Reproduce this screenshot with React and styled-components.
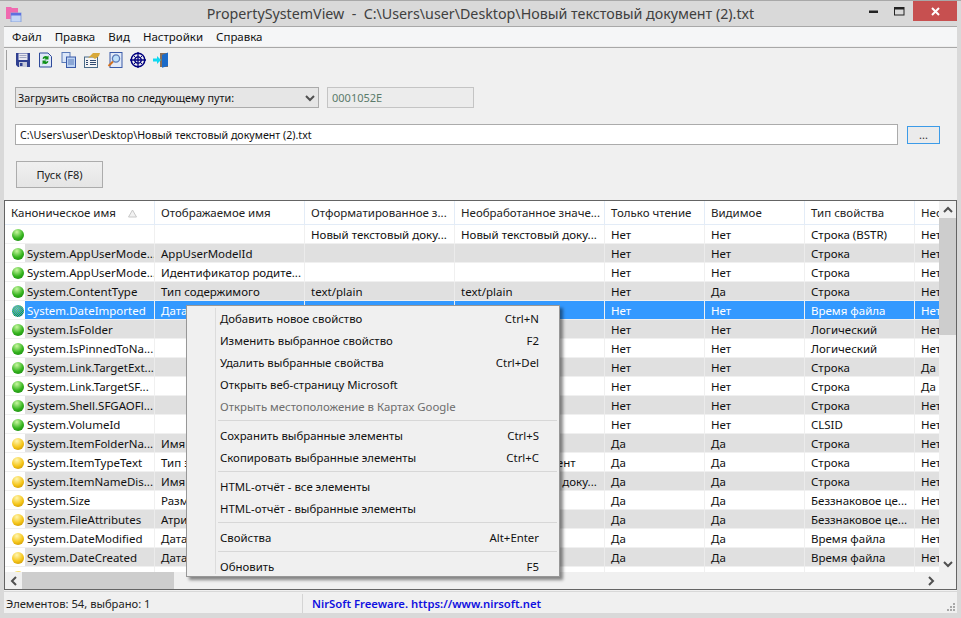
import React from 'react';
import styled, { createGlobalStyle } from 'styled-components';

const Global = createGlobalStyle`
  html, body { margin: 0; padding: 0; background: #d9d9d9; overflow: hidden; }
  * { box-sizing: border-box; }
  body { font-family: "Noto Sans", "Open Sans", sans-serif; font-size: 11.5px; color: #000; }
`;

const UI = '"Noto Sans", "Open Sans", sans-serif';

const Win = styled.div`
  width: 961px; height: 618px; background: #d9d9d9; border-top: 1px solid #a8a8a8;
  display: flex; flex-direction: column; padding: 0 4px 5px 4px; font-family: ${UI}; font-size: 11.5px;
`;
const TitleBar = styled.div` height: 25px; flex: none; display: flex; align-items: center; `;
const AppIcon = styled.svg` width: 16px; height: 16px; margin: 0 0 0 2px; flex: none; `;
const TitleText = styled.div`
  flex: 1; text-align: center; font-size: 14.25px; color: #404040; white-space: pre; padding-left: 79px;
`;
const WinButtons = styled.div` display: flex; align-self: flex-start; height: 20px; `;
const WinBtn = styled.div`
  width: ${p => p.$w}px; height: 20px; display: flex; align-items: center; justify-content: center;
  background: ${p => p.$close ? '#c75050' : 'transparent'};
`;
const Client = styled.div` flex: 1; display: flex; flex-direction: column; background: #f0f0f0; border-top: 1px solid #a8a8a8; min-height: 0; `;
const MenuBar = styled.div`
  height: 20px; flex: none; background: #f5f6f7; display: flex; align-items: center; padding-left: 8px; gap: 13px; font-size: 11.5px; color: #111;
  border-bottom: 1px solid #eeeeee;
`;
const Toolbar = styled.div`
  height: 25px; flex: none; border-top: 1px solid #a8a8a8; display: flex; align-items: center; padding-left: 2px; gap: 7px; background: #f0f0f0;
`;
const Grip = styled.div` width: 1px; height: 20px; background: #a0a0a0; margin-right: 1px; `;
const Form = styled.div` flex: none; height: 128px; display: flex; flex-direction: column; padding: 15px 0 0 11px; `;
const FormRow = styled.div` display: flex; align-items: center; `;
const Select = styled.div`
  width: 304px; height: 21px; border: 1px solid #ababab; background: #e6e6e6; display: flex; align-items: center; justify-content: space-between; padding: 0 3px 0 2px; font-size: 10.75px; color: #111;
`;
const ReadOnly = styled.div`
  width: 147px; height: 21px; margin-left: 8px; border: 1px solid #c4c4c4; background: #ececec; color: #5b7b6b; font-size: 11px; display: flex; align-items: center; padding-left: 4px;
`;
const PathInput = styled.div`
  width: 883px; height: 21px; border: 1px solid #ababab; background: #fff; display: flex; align-items: center; padding-left: 4px; font-size: 10.65px; color: #111; margin-top: 16px;
`;
const MoreBtn = styled.div`
  width: 33px; height: 18px; margin: 16px 0 0 9px; border: 1px solid #3c9be8; background: #ebebeb; font-size: 11px; color: #333; display: flex; justify-content: center; align-items: center;
`;
const GoBtn = styled.div`
  width: 87px; height: 27px; margin: 16px 0 0 1px; border: 1px solid #acacac; background: linear-gradient(#f0f0f0, #e5e5e5); display: flex; align-items: center; justify-content: center; font-size: 11px; color: #222;
`;
const TableBox = styled.div`
  flex: none; height: 390px; border: 1px solid #646464; position: relative; display: grid;
  grid-template-columns: 1fr 17px; grid-template-rows: 1fr 17px; background: #fff; overflow: hidden;
`;
const TableArea = styled.div` overflow: hidden; position: relative; `;
const HeadRow = styled.div` display: flex; height: 24px; background: #fff; `;
const Head = styled.div`
  width: ${p => p.$w}px; flex: none; height: 24px; border-right: 1px solid #e3ecf7; border-bottom: 1px solid #e3ecf7; padding-left: 6px; display: flex; align-items: center; white-space: nowrap; overflow: hidden; position: relative; font-size: 11.5px; color: #222;
`;
const SortMark = styled.svg` position: absolute; right: 17px; top: 9px; `;
const Row = styled.div` display: flex; height: 19px; background: ${p => p.$alt ? '#e0e0e0' : '#fff'}; `;
const Cell = styled.div`
  width: ${p => p.$w}px; flex: none; height: 19px; padding-left: 6px; display: flex; align-items: center; white-space: nowrap; overflow: hidden; font-size: 11.5px; color: #111;
  border-right: 1px solid ${p => p.$alt ? '#ebebeb' : '#f0f0f0'}; border-bottom: 1px solid #f0f0f0;
  background: ${p => p.$sel ? '#3399ff' : 'transparent'}; color: ${p => p.$sel ? '#fff' : '#111'};
`;
const FirstCell = styled(Cell)` padding-left: 0; background: #fff; `;
const Ball = styled.div`
  width: 12px; height: 12px; border-radius: 50%; margin: 1px 1px 0 7px; flex: none;
  background: ${p => p.$sel
    ? 'repeating-conic-gradient(#2d8fe8 0 25%, transparent 0 50%) 0 0 / 2px 2px, radial-gradient(circle at 40% 30%, #a6f07a 0%, #35b41e 55%, #0f7a0c 100%)'
    : `radial-gradient(circle at 40% 25%, ${p.$c[0]} 0%, ${p.$c[1]} 55%, ${p.$c[2]} 100%)`};
`;
const FirstLabel = styled.div`
  flex: 1; height: 19px; display: flex; align-items: center; padding-left: 2px; overflow: hidden;
  background: ${p => p.$sel ? '#3399ff' : p.$alt ? '#e0e0e0' : '#fff'}; color: ${p => p.$sel ? '#fff' : '#111'};
`;
const VBar = styled.div` background: #f0f0f0; display: flex; flex-direction: column; align-items: center; `;
const ArrowBtn = styled.div` flex: none; width: 17px; height: 17px; display: flex; align-items: center; justify-content: center; `;
const VTrack = styled.div` flex: 1; width: 100%; `;
const VThumb = styled.div` width: 100%; height: 117px; background: #cdcdcd; `;
const HBar = styled.div` background: #f0f0f0; display: flex; align-items: center; `;
const HThumb = styled.div` width: 152px; height: 17px; background: #cdcdcd; flex: none; `;
const Corner = styled.div` background: #f0f0f0; `;
const Status = styled.div` flex: 1; display: flex; font-size: 11.2px; margin-top: 1px; padding-top: 2px; border-top: 1px solid #d8d8d8; min-height: 0; position: relative; `;
const StatusA = styled.div` width: 299px; display: flex; align-items: center; padding-left: 2px; color: #222; border-right: 1px solid #d4d4d4; `;
const StatusB = styled.div` padding-left: 9px; flex: 1; display: flex; align-items: center; color: #1010e0; font-weight: 600; font-size: 11.3px; `;
const Resize = styled.svg` position: absolute; right: 1px; bottom: 1px; `;

const Menu = styled.div`
  position: absolute; left: 186px; top: 305px; width: 374px; height: 272px; background: #f0f0f0; border: 1px solid #979797;
  box-shadow: 3px 3px 3px rgba(0,0,0,0.45); padding: 1px 2px 2px; font-family: ${UI}; font-size: 11.4px;
`;
const Gutter = styled.div` position: absolute; left: 28px; top: 2px; bottom: 2px; width: 1px; background: #dcdcdc; `;
const Item = styled.div`
  height: 22px; display: flex; align-items: center; justify-content: space-between; padding: 0 18px 0 31px; color: ${p => p.$off ? '#6d6d6d' : '#111'}; white-space: nowrap;
`;
const Sep = styled.div` height: 7px; margin-left: 29px; display: flex; align-items: center; &::after { content: ""; flex: 1; height: 1px; background: #d7d7d7; } `;

const widths = [150, 150, 150, 150, 100, 100, 110, 60];
const headers = ['Каноническое имя','Отображаемое имя','Отформатированное з...','Необработанное значе...','Только чтение','Видимое','Тип свойства','Необр'];
const G = ['#c8f8a0','#35b41e','#0f7a0c'];
const Y = ['#fff6b0','#f5c518','#b98600'];
const rows = [
 [G,'','','Новый текстовый доку...','Новый текстовый доку...','Нет','Нет','Строка (BSTR)','Нет'],
 [G,'System.AppUserMode...','AppUserModelId','','','Нет','Нет','Строка','Нет'],
 [G,'System.AppUserMode...','Идентификатор родите...','','','Нет','Нет','Строка','Нет'],
 [G,'System.ContentType','Тип содержимого','text/plain','text/plain','Нет','Да','Строка','Нет'],
 [G,'System.DateImported','Дата импорта','','','Нет','Нет','Время файла','Нет'],
 [G,'System.IsFolder','','','','Нет','Нет','Логический','Нет'],
 [G,'System.IsPinnedToNa...','','','','Нет','Нет','Логический','Нет'],
 [G,'System.Link.TargetExt...','','','','Нет','Нет','Строка','Да'],
 [G,'System.Link.TargetSF...','','','','Нет','Нет','Строка','Да'],
 [G,'System.Shell.SFGAOFl...','','','','Нет','Нет','Строка','Нет'],
 [G,'System.VolumeId','','','','Нет','Нет','CLSID','Нет'],
 [Y,'System.ItemFolderNa...','Имя папки','','','Да','Да','Строка','Нет'],
 [Y,'System.ItemTypeText','Тип элемента','Текстовый документ','Текстовый документ','Да','Да','Строка','Нет'],
 [Y,'System.ItemNameDis...','Имя файла','Новый текстовый доку...','Новый текстовый доку...','Да','Да','Строка','Нет'],
 [Y,'System.Size','Размер','','','Да','Да','Беззнаковое це...','Нет'],
 [Y,'System.FileAttributes','Атрибуты','','','Да','Да','Беззнаковое це...','Нет'],
 [Y,'System.DateModified','Дата изменения','','','Да','Да','Время файла','Нет'],
 [Y,'System.DateCreated','Дата создания','','','Да','Да','Время файла','Нет'],
 [Y,'','','','','','','',''],
];

const ToolIcons = () => (<>
  <svg width="16" height="16" viewBox="0 0 16 16"><path d="M1 1h14v14H3l-2-2z" fill="#2f3f90"/><rect x="3.5" y="1.5" width="9" height="6.5" fill="#e8e8f0"/><path d="M4.5 3.5h7M4.5 5.5h7" stroke="#a0a6c0"/><rect x="4" y="10" width="8" height="5" fill="#c4c8d8"/><rect x="5" y="11" width="2.5" height="3" fill="#2f3f90"/></svg>
  <svg width="16" height="16" viewBox="0 0 16 16"><path d="M1.5 1H10l3.5 3.5V15h-12z" fill="#dfe8f8" stroke="#2f4a9a"/><path d="M4.5 6.5 a3.5 3.5 0 0 1 5-2 l1-1 v4 h-4 l1-1 a1.5 1.5 0 0 0-1.8 0.5z M10.5 9.5 a3.5 3.5 0 0 1-5 2 l-1 1 v-4 h4 l-1 1 a1.5 1.5 0 0 0 1.8-0.5z" fill="#109018"/></svg>
  <svg width="16" height="16" viewBox="0 0 16 16"><rect x="1" y="0.5" width="8" height="10" fill="#dbe6f8" stroke="#5a7ab8"/><rect x="5.5" y="5" width="9" height="10.5" fill="#bcd2f2" stroke="#3a5aa8"/><path d="M7 8h6M7 10h6M7 12h6" stroke="#5a7ab8"/></svg>
  <svg width="16" height="16" viewBox="0 0 16 16"><rect x="0.5" y="5" width="13" height="10.5" fill="#f4f4f4" stroke="#4a6a88"/><path d="M2 8.5h2M6 8.5h6M2 10.5h2M6 10.5h6M2 12.5h2M6 12.5h6" stroke="#304a70"/><path d="M4 6 L9 1 L16 1 L15 4 L11 7 L8 5 Z" fill="#d8a838"/></svg>
  <svg width="16" height="16" viewBox="0 0 16 16"><rect x="3" y="0.5" width="12" height="15" fill="#e2eaf8" stroke="#3a5aa8"/><circle cx="9" cy="6.5" r="3.6" fill="#bfe0fa" stroke="#5a7ab8" strokeWidth="1.3"/><path d="M6 9.5 L1.5 14" stroke="#d07020" strokeWidth="2"/></svg>
  <svg width="16" height="16" viewBox="0 0 16 16" fill="none" stroke="#00007f"><circle cx="8" cy="8" r="6.8" strokeWidth="1.5"/><circle cx="8" cy="8" r="3.2" strokeWidth="1.3"/><path d="M8 0v16M0 8h16" strokeWidth="1.3"/><path d="M4 4.5h1M11 4.5h1M4 11.5h1M11 11.5h1" strokeWidth="1"/></svg>
  <svg width="16" height="16" viewBox="0 0 16 16"><path d="M7 1h8v14H7z" fill="#8a7058"/><path d="M9 3 L15 0.5 V14 L9 15.8Z" fill="#1a6ac8"/><path d="M0 6.5h4V4l4 4-4 4V9.5H0z" fill="#10d8f0"/></svg>
</>);

const Chev = ({d}) => {
  const p = {up:'M1 6 L5 2 L9 6', down:'M1 2 L5 6 L9 2', left:'M6 1 L2 5 L6 9', right:'M2 1 L6 5 L2 9'}[d];
  const horiz = d==='left'||d==='right';
  return <svg width={horiz?8:10} height={horiz?10:8} viewBox={horiz?'0 0 8 10':'0 0 10 8'} fill="none" stroke="#505050" strokeWidth="2"><path d={p}/></svg>;
};

export default function App() {
  return (<>
    <Global />
    <Win>
      <TitleBar>
        <AppIcon viewBox="0 0 16 16">
          <path d="M0 1h5l1 1h6v11H0z" fill="#f06ab0"/><rect x="5" y="7" width="10" height="9" fill="#c4d6f6" stroke="#8aa4dc"/><rect x="5" y="7" width="10" height="2.5" fill="#6070e0"/>
        </AppIcon>
        <TitleText>PropertySystemView  -  C:\Users\user\Desktop\Новый текстовый документ (2).txt</TitleText>
        <WinButtons>
          <WinBtn $w={26}><svg width="9" height="3"><rect width="9" height="2.5" y="0.5" fill="#222"/></svg></WinBtn>
          <WinBtn $w={27}><svg width="11" height="9"><rect x="0.5" y="0.5" width="9.5" height="7.5" fill="none" stroke="#222"/><rect x="0.5" y="0.5" width="9.5" height="2" fill="#222"/></svg></WinBtn>
          <WinBtn $w={44} $close><svg width="9" height="9" stroke="#fff" strokeWidth="2"><path d="M1 1L8 8M8 1L1 8"/></svg></WinBtn>
        </WinButtons>
      </TitleBar>
      <Client>
        <MenuBar>{['Файл','Правка','Вид','Настройки','Справка'].map(m=><span key={m}>{m}</span>)}</MenuBar>
        <Toolbar><Grip/><ToolIcons/></Toolbar>
        <Form>
          <FormRow>
            <Select><span>Загрузить свойства по следующему пути:</span><Chev d="down"/></Select>
            <ReadOnly>0001052E</ReadOnly>
          </FormRow>
          <FormRow>
            <PathInput>C:\Users\user\Desktop\Новый текстовый документ (2).txt</PathInput>
            <MoreBtn>...</MoreBtn>
          </FormRow>
          <GoBtn>Пуск (F8)</GoBtn>
        </Form>
        <TableBox>
          <TableArea>
            <HeadRow>{headers.map((h,i)=><Head key={i} $w={widths[i]}>{h}{i===0&&<SortMark width="9" height="8"><path d="M4.5 0L8.5 7H0.5z" fill="#f2f2f2" stroke="#c8c8c8"/></SortMark>}</Head>)}</HeadRow>
            {rows.map((r,i)=>{
              const alt = i%2===1; const sel = i===4;
              return <Row key={i} $alt={alt}>
                <FirstCell $w={widths[0]} $alt={alt}><Ball $c={r[0]} $sel={sel}/>{r[1]&&<FirstLabel $alt={alt} $sel={sel}>{r[1]}</FirstLabel>}</FirstCell>
                {r.slice(2).map((c,j)=><Cell key={j} $w={widths[j+1]} $alt={alt} $sel={sel}>{c}</Cell>)}
              </Row>;
            })}
          </TableArea>
          <VBar><ArrowBtn><Chev d="up"/></ArrowBtn><VTrack><VThumb/></VTrack><ArrowBtn><Chev d="down"/></ArrowBtn></VBar>
          <HBar><ArrowBtn><Chev d="left"/></ArrowBtn><HThumb/><VTrack/><ArrowBtn><Chev d="right"/></ArrowBtn></HBar>
          <Corner/>
        </TableBox>
        <Status>
          <StatusA>Элементов: 54, выбрано: 1</StatusA>
          <StatusB>NirSoft Freeware. https://www.nirsoft.net</StatusB>
          <Resize width="10" height="10" fill="#a8a8a8"><rect x="7" y="1" width="2" height="2"/><rect x="4" y="4" width="2" height="2"/><rect x="7" y="4" width="2" height="2"/><rect x="1" y="7" width="2" height="2"/><rect x="4" y="7" width="2" height="2"/><rect x="7" y="7" width="2" height="2"/></Resize>
        </Status>
      </Client>
    </Win>
    <Menu>
      <Gutter/>
      <Item><span>Добавить новое свойство</span><span>Ctrl+N</span></Item>
      <Item><span>Изменить выбранное свойство</span><span>F2</span></Item>
      <Item><span>Удалить выбранные свойства</span><span>Ctrl+Del</span></Item>
      <Item><span>Открыть веб-страницу Microsoft</span></Item>
      <Item $off><span>Открыть местоположение в Картах Google</span></Item>
      <Sep/>
      <Item><span>Сохранить выбранные элементы</span><span>Ctrl+S</span></Item>
      <Item><span>Скопировать выбранные элементы</span><span>Ctrl+C</span></Item>
      <Sep/>
      <Item><span>HTML-отчёт - все элементы</span></Item>
      <Item><span>HTML-отчёт - выбранные элементы</span></Item>
      <Sep/>
      <Item><span>Свойства</span><span>Alt+Enter</span></Item>
      <Sep/>
      <Item><span>Обновить</span><span>F5</span></Item>
    </Menu>
  </>);
}
